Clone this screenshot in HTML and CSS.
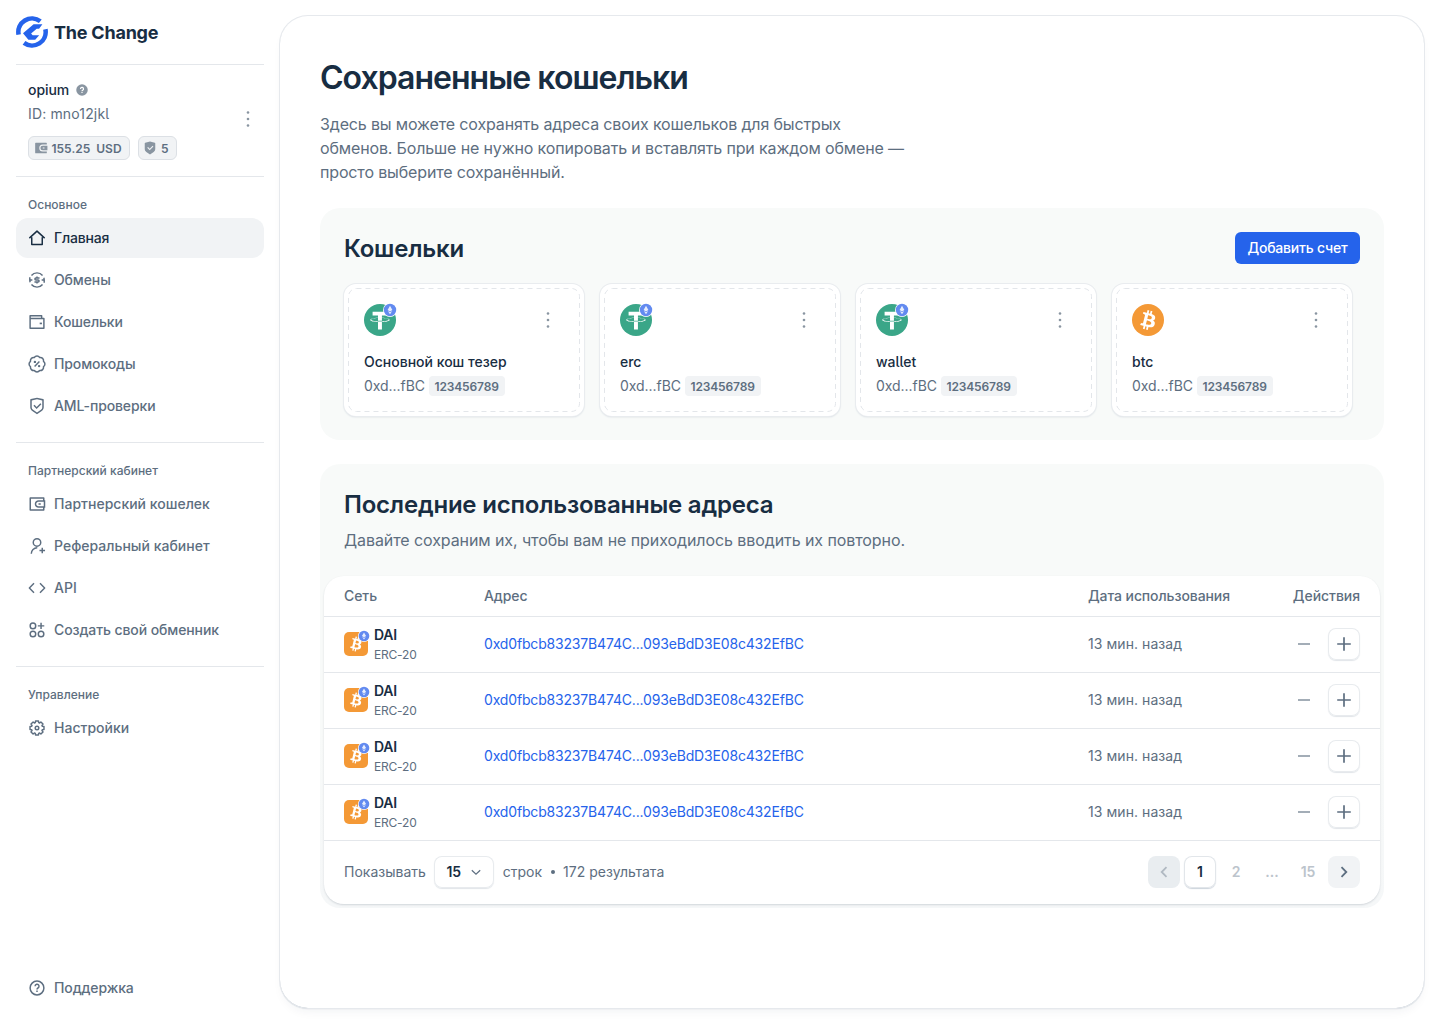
FILE: index.html
```html
<!DOCTYPE html>
<html lang="ru">
<head>
<meta charset="utf-8">
<title>The Change</title>
<link rel="stylesheet" href="styles.css">
</head>
<body>
<svg class="sprite" aria-hidden="true">
  <symbol id="home" viewBox="0 0 24 24"><path class="line" d="M5 11v9.6h14V11M1.8 12.2 12 2.8l10.2 9.4"/></symbol>
  <symbol id="swap" viewBox="0 0 24 24"><path class="line" d="M4.600 6a9.600 9.600 0 0 1 14.800 0M4.600 18a9.600 9.600 0 0 0 14.800 0M5.800 12H2.400V8.200M2.400 12a9.600 9.600 0 0 0 .5 3M18.200 12h3.400v3.800M21.600 12a9.600 9.600 0 0 0-.5-3M15.400 9.200h-4.800a1.400 1.400 0 0 0 0 2.800h2.800a1.400 1.400 0 0 1 0 2.800H8.600M12 7.400v1.800M12 14.800v1.800"/></symbol>
  <symbol id="wallet" viewBox="0 0 24 24"><path class="line" d="M2.8 7.4V3.8h15.4v3.6M2.8 7.4h18.4v12.8H2.8z"/><path d="M15.6 12.8h3v2.2h-3z"/></symbol>
  <symbol id="promo" viewBox="0 0 24 24"><path class="line" d="M20.700 8.400a4.400 4.400 0 0 1 0 7.200 4.400 4.400 0 0 1-5.100 5.100 4.400 4.400 0 0 1-7.200 0 4.400 4.400 0 0 1-5.100-5.100 4.400 4.400 0 0 1 0-7.200 4.400 4.400 0 0 1 5.100-5.100 4.400 4.400 0 0 1 7.200 0 4.400 4.400 0 0 1 5.100 5.100zM15.2 8.8l-6.4 6.4"/><circle cx="9.2" cy="9.2" r="1.6"/><circle cx="14.8" cy="14.8" r="1.6"/></symbol>
  <symbol id="shield" viewBox="0 0 24 24"><path d="M12 1L20.217 2.826C20.6745 2.928 21 3.333 21 3.802V13.789C21 15.795 19.997 17.668 18.328 18.781L12 23L5.672 18.781C4.003 17.668 3 15.795 3 13.789V3.802C3 3.333 3.326 2.928 3.783 2.826L12 1ZM12 3.049L5 4.604V13.789C5 15.126 5.668 16.375 6.781 17.117L12 20.596L17.219 17.117C18.332 16.375 19 15.126 19 13.789V4.604L12 3.049ZM16.452 8.222L17.867 9.636L11.503 16L7.26 11.757L8.674 10.343L11.502 13.171L16.452 8.222Z"/></symbol>
  <symbol id="shield-fill" viewBox="0 0 24 24"><path fill-rule="evenodd" d="M12 1L20.217 2.826C20.6745 2.928 21 3.333 21 3.802V13.789C21 15.795 19.997 17.668 18.328 18.781L12 23L5.672 18.781C4.003 17.668 3 15.795 3 13.789V3.802C3 3.333 3.326 2.928 3.783 2.826L12 1ZM16.452 8.222L11.502 13.171L8.674 10.343L7.26 11.757L11.503 16L17.867 9.636L16.452 8.222Z"/></symbol>
  <symbol id="purse" viewBox="0 0 24 24"><path d="M22 7H23V17H22V20C22 20.55 21.55 21 21 21H3C2.45 21 2 20.55 2 20V4C2 3.45 2.45 3 3 3H21C21.55 3 22 3.45 22 4V7ZM20 17H14C11.24 17 9 14.76 9 12C9 9.24 11.24 7 14 7H20V5H4V19H20V17ZM21 15V9H14C12.35 9 11 10.34 11 12C11 13.66 12.35 15 14 15H21ZM14 11H17V13H14V11Z"/></symbol>
  <symbol id="purse-fill" viewBox="0 0 24 24"><path d="M22 6h-7a6 6 0 1 0 0 12h7v2a1 1 0 0 1-1 1H3a1 1 0 0 1-1-1V4a1 1 0 0 1 1-1h18a1 1 0 0 1 1 1v2zm-7 2h8v8h-8a4 4 0 1 1 0-8zm0 3v2h3v-2h-3z"/></symbol>
  <symbol id="referral" viewBox="0 0 24 24"><circle class="line" cx="12" cy="7.2" r="5"/><path class="line" d="M4.4 22.4a7.8 7.8 0 0 1 8-8M19 14.4v7.4M15.3 18.1h7.4"/></symbol>
  <symbol id="code" viewBox="0 0 24 24"><path class="line" d="M8 5.8 1.8 12 8 18.2M16 5.8l6.2 6.2-6.2 6.2"/></symbol>
  <symbol id="create" viewBox="0 0 24 24"><circle class="line" cx="6.6" cy="6.5" r="3.7"/><circle class="line" cx="6.6" cy="17.3" r="3.7"/><circle class="line" cx="17.4" cy="17.3" r="3.7"/><path class="line" d="M17.4 2.2v8.600M13.100 6.5h8.600"/></symbol>
  <symbol id="gear" viewBox="0 0 24 24"><path class="line" d="M21.3 10v4l-2.1.2-.6 1.3 1.4 1.7-2.8 2.8-1.7-1.4-1.3.6-.2 2.1h-4l-.2-2.1-1.3-.6L6.800 20 4 17.200l1.400-1.700-.6-1.3-2.1-.2v-4l2.100-.2.6-1.300L4 6.800 6.800 4l1.700 1.400 1.300-.6.2-2.100h4l.2 2.100 1.300.6L17.200 4 20 6.800l-1.400 1.700.6 1.300z"/><circle class="line" cx="12" cy="12" r="2.4"/></symbol>
  <symbol id="help" viewBox="0 0 24 24"><circle class="line" cx="12" cy="12" r="9.2"/><path class="line" d="M9.400 9.700a2.650 2.650 0 1 1 3.900 2.300c-.9.500-1.300.9-1.300 2"/><path d="M11 15.300h2v2h-2z"/></symbol>
  <symbol id="help-fill" viewBox="0 0 24 24"><circle cx="12" cy="12" r="11.500"/><path class="knock" d="M9 9.800a3 3 0 1 1 4.400 2.600c-1 .5-1.400.9-1.400 1.900M12 16v2.200"/></symbol>
  <symbol id="dots" viewBox="0 0 4 18"><circle cx="2" cy="2.500" r="1.300"/><circle cx="2" cy="9" r="1.300"/><circle cx="2" cy="15.500" r="1.300"/></symbol>
  <symbol id="plus" viewBox="0 0 16 16"><path class="glyph" d="M8 1.200v13.600M1.200 8h13.600"/></symbol>
  <symbol id="left" viewBox="0 0 16 16"><path class="glyph" d="M10.500 3.200 5.700 8l4.800 4.800"/></symbol>
  <symbol id="right" viewBox="0 0 16 16"><path class="glyph" d="M5.500 3.200 10.300 8l-4.800 4.800"/></symbol>
  <symbol id="down" viewBox="0 0 16 16"><path class="glyph" d="M3.800 6.200 8 10.200l4.200-4"/></symbol>
  <symbol id="btc" viewBox="0 0 32 32"><path d="M23.189 14.02c.314-2.096-1.283-3.223-3.465-3.975l.708-2.84-1.728-.43-.69 2.765c-.454-.114-.92-.22-1.385-.326l.695-2.783L15.596 6l-.708 2.839c-.376-.086-.746-.17-1.104-.26l.002-.009-2.384-.595-.46 1.846s1.283.294 1.256.312c.7.175.826.638.805 1.006l-1.940 7.765c-.086.212-.303.531-.793.41.018.025-1.256-.313-1.256-.313l-.858 1.978 2.250.561c.418.105.828.215 1.231.318l-.715 2.872 1.727.43.708-2.840c.472.127.93.245 1.378.357l-.706 2.828 1.728.43.715-2.866c2.948.558 5.164.333 6.097-2.333.752-2.146-.037-3.385-1.588-4.192 1.130-.26 1.980-1.003 2.207-2.538zm-3.950 5.538c-.533 2.147-4.148.986-5.320.695l.95-3.805c1.172.293 4.929.872 4.370 3.110zm.535-5.569c-.487 1.953-3.495.96-4.470.717l.86-3.450c.975.243 4.118.696 3.610 2.733z"/></symbol>
  <symbol id="usdt" viewBox="0 0 32 32"><path d="M17.922 17.383v-.002c-.11.008-.677.042-1.942.042-1.010 0-1.721-.03-1.971-.042v.003c-3.888-.171-6.790-.848-6.790-1.658 0-.809 2.902-1.486 6.790-1.660v2.644c.254.018.982.061 1.988.061 1.207 0 1.812-.05 1.925-.06v-2.643c3.880.173 6.775.85 6.775 1.658 0 .81-2.895 1.485-6.775 1.657m0-3.590v-2.366h5.414V7.819H8.595v3.608h5.414v2.365c-4.400.202-7.709 1.074-7.709 2.118 0 1.044 3.309 1.915 7.709 2.118v7.582h3.913v-7.584c4.393-.202 7.694-1.073 7.694-2.116 0-1.043-3.301-1.914-7.694-2.117"/></symbol>
  <symbol id="eth" viewBox="0 0 14 14"><circle cx="7" cy="7" r="7" fill="#fff"/><circle cx="7" cy="7" r="6.200" fill="#628af0"/><path fill="#fff" d="M7 2.800 9.400 7 7 8.400 4.600 7zM7 9.200l2.200-1.300L7 11.200 4.800 7.900z" opacity=".85"/></symbol>
  <symbol id="frame" viewBox="0 0 232 124"><rect x=".5" y=".5" width="231" height="123" rx="8" fill="none" stroke="#e3e6ea" stroke-dasharray="5 4"/></symbol>
</svg>

<div class="app">
  <aside class="sidebar">
    <a class="brand">
      <svg class="brand-mark" viewBox="0 0 32 32"><path class="brand-arc" d="M2.600 18.600A13.600 13.600 0 0 1 24.300 5.300M29.400 13.300A13.600 13.600 0 0 1 8 26.900"/><path d="M26.400 8.300H17.600L7 17.200l5.400 6.500h6.800l4-4.400h-6.600l-1.500-1.800 5.600-4.700h2.400z"/></svg>
      <span>The Change</span>
    </a>

    <section class="profile">
      <div>
        <div class="profile-name">opium <svg class="tip"><use href="#help-fill"/></svg></div>
        <div class="profile-id">ID: mno12jkl</div>
        <div class="chips">
          <span class="chip"><svg><use href="#purse-fill"/></svg>155.25&nbsp; USD</span>
          <span class="chip"><svg><use href="#shield-fill"/></svg>5</span>
        </div>
      </div>
      <svg class="dots"><use href="#dots"/></svg>
    </section>

    <nav class="group">
      <h4>Основное</h4>
      <a class="item active"><svg><use href="#home"/></svg>Главная</a>
      <a class="item"><svg><use href="#swap"/></svg>Обмены</a>
      <a class="item"><svg><use href="#wallet"/></svg>Кошельки</a>
      <a class="item"><svg><use href="#promo"/></svg>Промокоды</a>
      <a class="item"><svg><use href="#shield"/></svg>AML-проверки</a>
    </nav>
    <nav class="group partner">
      <h4>Партнерский кабинет</h4>
      <a class="item"><svg><use href="#purse"/></svg>Партнерский кошелек</a>
      <a class="item"><svg><use href="#referral"/></svg>Реферальный кабинет</a>
      <a class="item"><svg><use href="#code"/></svg>API</a>
      <a class="item tight"><svg><use href="#create"/></svg>Создать свой обменник</a>
    </nav>
    <nav class="group partner last">
      <h4>Управление</h4>
      <a class="item"><svg><use href="#gear"/></svg>Настройки</a>
    </nav>
    <a class="item support"><svg><use href="#help"/></svg>Поддержка</a>
  </aside>

  <main class="page">
    <h1>Сохраненные кошельки</h1>
    <p class="lead">Здесь вы можете сохранять адреса своих кошельков для быстрых<br>обменов. Больше не нужно копировать и вставлять при каждом обмене —<br>просто выберите сохранённый.</p>

    <section class="panel wallets">
      <header>
        <h2>Кошельки</h2>
        <button class="primary">Добавить счет</button>
      </header>
      <div class="cards">
        <article class="card">
          <svg class="frame"><use href="#frame"/></svg>
          <div class="card-top"><span class="coin usdt"><svg><use href="#usdt"/></svg><svg class="net"><use href="#eth"/></svg></span><svg class="dots"><use href="#dots"/></svg></div>
          <div class="card-name">Основной кош тезер</div>
          <div class="card-addr">0xd...fBC <span class="memo">123456789</span></div>
        </article>
        <article class="card">
          <svg class="frame"><use href="#frame"/></svg>
          <div class="card-top"><span class="coin usdt"><svg><use href="#usdt"/></svg><svg class="net"><use href="#eth"/></svg></span><svg class="dots"><use href="#dots"/></svg></div>
          <div class="card-name">erc</div>
          <div class="card-addr">0xd...fBC <span class="memo">123456789</span></div>
        </article>
        <article class="card">
          <svg class="frame"><use href="#frame"/></svg>
          <div class="card-top"><span class="coin usdt"><svg><use href="#usdt"/></svg><svg class="net"><use href="#eth"/></svg></span><svg class="dots"><use href="#dots"/></svg></div>
          <div class="card-name">wallet</div>
          <div class="card-addr">0xd...fBC <span class="memo">123456789</span></div>
        </article>
        <article class="card">
          <svg class="frame"><use href="#frame"/></svg>
          <div class="card-top"><span class="coin btc"><svg><use href="#btc"/></svg></span><svg class="dots"><use href="#dots"/></svg></div>
          <div class="card-name">btc</div>
          <div class="card-addr">0xd...fBC <span class="memo">123456789</span></div>
        </article>
      </div>
    </section>

    <section class="panel recent">
      <h2>Последние использованные адреса</h2>
      <p>Давайте сохраним их, чтобы вам не приходилось вводить их повторно.</p>
      <div class="table">
        <div class="row head"><span>Сеть</span><span>Адрес</span><span>Дата использования</span><span class="end">Действия</span></div>
        <div class="row">
          <div class="asset"><span class="coin btc small"><svg><use href="#btc"/></svg><svg class="net"><use href="#eth"/></svg></span><div><b>DAI</b><small>ERC-20</small></div></div>
          <a class="hash">0xd0fbcb83237B474C...093eBdD3E08c432EfBC</a><span class="when">13 мин. назад</span>
          <div class="actions"><i class="minus"></i><button class="square"><svg><use href="#plus"/></svg></button></div>
        </div>
        <div class="row">
          <div class="asset"><span class="coin btc small"><svg><use href="#btc"/></svg><svg class="net"><use href="#eth"/></svg></span><div><b>DAI</b><small>ERC-20</small></div></div>
          <a class="hash">0xd0fbcb83237B474C...093eBdD3E08c432EfBC</a><span class="when">13 мин. назад</span>
          <div class="actions"><i class="minus"></i><button class="square"><svg><use href="#plus"/></svg></button></div>
        </div>
        <div class="row">
          <div class="asset"><span class="coin btc small"><svg><use href="#btc"/></svg><svg class="net"><use href="#eth"/></svg></span><div><b>DAI</b><small>ERC-20</small></div></div>
          <a class="hash">0xd0fbcb83237B474C...093eBdD3E08c432EfBC</a><span class="when">13 мин. назад</span>
          <div class="actions"><i class="minus"></i><button class="square"><svg><use href="#plus"/></svg></button></div>
        </div>
        <div class="row">
          <div class="asset"><span class="coin btc small"><svg><use href="#btc"/></svg><svg class="net"><use href="#eth"/></svg></span><div><b>DAI</b><small>ERC-20</small></div></div>
          <a class="hash">0xd0fbcb83237B474C...093eBdD3E08c432EfBC</a><span class="when">13 мин. назад</span>
          <div class="actions"><i class="minus"></i><button class="square"><svg><use href="#plus"/></svg></button></div>
        </div>
        <footer>
          <div class="summary"><span>Показывать</span><button class="select">15<svg><use href="#down"/></svg></button><span>строк</span><i class="bullet"></i><span>172 результата</span></div>
          <div class="pager">
            <button class="prev"><svg><use href="#left"/></svg></button>
            <button class="current">1</button>
            <button>2</button>
            <button>...</button>
            <button>15</button>
            <button class="next"><svg><use href="#right"/></svg></button>
          </div>
        </footer>
      </div>
    </section>
  </main>
</div>
</body>
</html>
```

FILE: styles.css
```css
:root {
  --ink: #182d42;
  --muted: #5d6e80;
  --soft: #8995a1;
  --line: #e4e7eb;
  --fill: #f1f3f5;
  --blue: #2563eb;
}
* { box-sizing: border-box; }
body {
  margin: 0;
  background: #fff;
  color: var(--muted);
  font: 400 14px/20px Inter, "Noto Sans", sans-serif;
  font-feature-settings: "cv05";
}
h1, h2, h4, p { margin: 0; }
svg { display: block; fill: currentColor; flex: none; }
button {
  display: flex;
  align-items: center;
  justify-content: center;
  padding: 0;
  border: 0;
  background: none;
  color: inherit;
  font: inherit;
  font-feature-settings: inherit;
}
.sprite { position: absolute; width: 0; height: 0; }
.line { fill: none; stroke: currentColor; stroke-width: 1.95; stroke-linejoin: round; }
.glyph { fill: none; stroke: currentColor; stroke-width: var(--stroke, 1.6); }
.knock { fill: none; stroke: #fff; stroke-width: 2.4; }

.app { display: flex; height: 1024px; padding: 16px 16px 16px 0; }

/* Sidebar */
.sidebar { display: flex; flex-direction: column; width: 280px; padding: 0 16px; }
.brand {
  display: flex;
  align-items: center;
  gap: 6px;
  box-sizing: content-box;
  height: 32px;
  padding-bottom: 16px;
  border-bottom: 1px solid var(--line);
  color: var(--ink);
  font-size: 18px;
  font-weight: 700;
  letter-spacing: -.22px;
}
.brand span { padding-top: 2px; }
.brand-mark { width: 32px; height: 32px; color: var(--blue); }
.brand-arc { fill: none; stroke: currentColor; stroke-width: 4.6; }
.profile {
  display: flex;
  justify-content: space-between;
  align-items: center;
  height: 112px;
  padding: 0 14px 3px 12px;
  border-bottom: 1px solid var(--line);
}
.profile-name { display: flex; align-items: center; gap: 7px; height: 24px; color: var(--ink); font-weight: 500; letter-spacing: -.05px; }
.tip { width: 12px; height: 12px; color: var(--soft); }
.profile-id { height: 24px; line-height: 24px; margin-bottom: 10px; letter-spacing: .15px; }
.dots { width: 4px; height: 18px; color: var(--soft); }
.chips { display: flex; gap: 8px; }
.chip {
  display: flex;
  align-items: center;
  gap: 4px;
  height: 24px;
  padding: 1px 7px 0 4.5px;
  border: 1px solid #dce0e5;
  border-radius: 6px;
  background: var(--fill);
  font-size: 12px;
  font-weight: 600;
}
.chip svg { width: 14px; height: 14px; margin-top: -1px; color: var(--soft); }
.group { display: flex; flex-direction: column; gap: 2px; padding: 16px 0; border-bottom: 1px solid var(--line); }
.group.last { border: 0; }
.group h4 { height: 23px; padding: 2px 12px 0; font-size: 12px; font-weight: 500; line-height: 20px; }
.item {
  display: flex;
  align-items: center;
  gap: 8px;
  height: 40px;
  padding: 0 12px;
  border-radius: 12px;
  font-weight: 500;
  letter-spacing: -.12px;
}
.partner .item { letter-spacing: .01px; }
.partner .item.tight { letter-spacing: -.1px; }
.item svg { width: 18px; height: 18px; }
.item.active { background: var(--fill); color: var(--ink); letter-spacing: -.2px; }
.support { margin-top: auto; }

/* Page */
.page {
  flex: 1;
  padding: 40px;
  border-radius: 28px;
  box-shadow: 0 0 0 1px #e6e9ed, 0 1px 1px 0 #b9c2cb, 0 6px 12px -4px rgba(24, 45, 66, .07);
}
h1 { color: var(--ink); font-size: 32px; font-weight: 600; line-height: 40px; letter-spacing: -.97px; padding-top: 2px; }
.lead { margin: 14px 0 24px; font-size: 16px; line-height: 24px; letter-spacing: -.145px; }
h2 { padding-top: 1px; color: var(--ink); font-size: 24px; font-weight: 600; line-height: 32px; letter-spacing: -.21px; }
.panel { border-radius: 20px; background: #f8faf9; }
.wallets { height: 232px; padding: 24px; margin-bottom: 24px; }
.wallets header { display: flex; justify-content: space-between; height: 32px; margin-bottom: 20px; }
.primary { width: 125px; height: 32px; border-radius: 6px; background: var(--blue); color: #fff; font-weight: 500; letter-spacing: -.21px; }
.cards { display: flex; gap: 16px; }
.card {
  position: relative;
  width: 240px;
  height: 132px;
  padding: 20px;
  border-radius: 12px;
  background: #fff;
  box-shadow: 0 0 0 1px #e9ecef, 0 1px 2px 0 #ccd3da;
}
.frame { position: absolute; inset: 4px; width: 232px; height: 124px; }
.card-top { display: flex; justify-content: space-between; align-items: center; padding-right: 14px; margin-bottom: 14px; }
.card-name { height: 24px; color: var(--ink); font-weight: 500; line-height: 24px; }
.card-addr { display: flex; align-items: center; gap: 4px; height: 24px; letter-spacing: -.04px; }
.memo { height: 20px; padding: 1px 6px 0 5.5px; border-radius: 4px; background: var(--fill); font-size: 12px; font-weight: 600; letter-spacing: -.15px; }
.coin { position: relative; display: block; width: 32px; height: 32px; border-radius: 50%; color: #fff; }
.coin svg { width: 32px; height: 32px; }
.coin.usdt { background: #3aa688; }
.coin.btc { background: #f49936; }
.coin .net { position: absolute; top: -1px; right: -1px; width: 14px; height: 14px; }
.coin.small { width: 24px; height: 24px; border-radius: 5px; }
.coin.small svg { width: 24px; height: 24px; }
.coin.small .net { top: -2px; right: -2px; width: 12px; height: 12px; }

/* Recent addresses */
.recent { padding: 24px 4px 4px; background: linear-gradient(#f8faf9 0 60%, #f5f7f8); }
.recent h2, .recent > p { padding-left: 20px; }
.recent > p { margin: 7px 0 24px; font-size: 16px; line-height: 24px; letter-spacing: -.083px; }
.table { border-radius: 20px; background: #fff; box-shadow: 0 1px 2px 0 rgba(24, 45, 66, .16); }
.row {
  display: grid;
  grid-template-columns: 140px 604px 1fr auto;
  align-items: center;
  height: 56px;
  padding: 0 20px 1px;
  border-bottom: 1px solid var(--line);
}
.row.head { height: 41px; padding-bottom: 0; font-weight: 500; letter-spacing: -.09px; }
.end { letter-spacing: -.05px; }
.asset { display: flex; align-items: center; gap: 6px; }
.asset b { display: block; height: 20px; color: var(--ink); font-weight: 600; letter-spacing: -.2px; line-height: 21px; }
.asset small { display: block; height: 20px; font-size: 12px; line-height: 22px; letter-spacing: -.2px; }
.hash { color: var(--blue); letter-spacing: -.17px; }
.when { letter-spacing: .06px; }
.actions { display: flex; align-items: center; gap: 18px; }
.minus { width: 12px; height: 2px; background: #a3adb7; }
.square {
  --stroke: 1.7;
  width: 32px;
  height: 32px;
  border-radius: 8px;
  box-shadow: inset 0 0 0 1px #e8ebee, 0 1px 1px 0 #e1e5e9;
}
.square svg { width: 16px; height: 16px; }
.table footer { display: flex; justify-content: space-between; align-items: center; height: 63px; padding: 0 20px 1px; }
.summary { display: flex; align-items: center; gap: 8.5px; }
.select {
  gap: 7px;
  width: 60px;
  height: 32px;
  padding-left: 2px;
  border-radius: 8px;
  box-shadow: inset 0 0 0 1px #e8ebee, 0 1px 1px 0 #e1e5e9;
  color: var(--ink);
  font-weight: 600;
}
.select svg { --stroke: 1.2; width: 16px; height: 16px; color: var(--muted); }
.bullet { width: 4px; height: 4px; border-radius: 50%; background: var(--muted); }
.pager { display: flex; gap: 4px; }
.pager button { --stroke: 1.8; width: 32px; height: 32px; border-radius: 8px; color: #bcc4cc; font-weight: 600; }
.pager svg { width: 16px; height: 16px; }
.pager .prev { background: #e9edf0; color: #b0b9c2; }
.pager .current { color: var(--ink); box-shadow: inset 0 0 0 1px #e2e6ea, 0 1px 1px 0 #cdd4dc; }
.pager .next { background: var(--fill); color: var(--muted); }
```
